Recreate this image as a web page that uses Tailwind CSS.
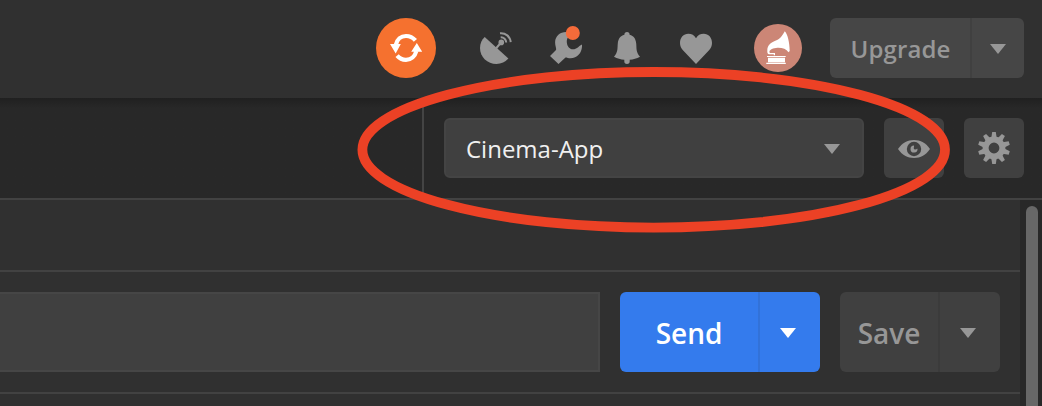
<!DOCTYPE html>
<html lang="en">
<head>
<meta charset="utf-8">
<title>Cinema-App</title>
<script src="https://cdn.jsdelivr.net/npm/@tailwindcss/browser@4"></script>
</head>
<body class="relative flex h-[406px] w-[1042px] flex-col overflow-hidden bg-[#303030] font-['Open_Sans',sans-serif] text-[#979797]">
  <header class="flex h-[98px] shrink-0 items-start justify-end pr-[18px] pt-[18px]">
    <button class="mr-[44px] size-[60px] rounded-full bg-[#f5712f]" aria-label="Sync">
      <svg class="block size-[60px]" viewBox="0 0 60 60" fill="none">
        <path d="M19.800 27C21 21.500 25 18 30 18c4 0 7 1.600 9.400 4.400M40.400 33C39 38.300 35 41.800 30 41.800c-3.700 0-6.500-1.300-8.900-4.200" stroke="#fff" stroke-width="4.200"/>
        <path d="M14 26h10.800l-5.100 9.400zM35.200 33.700h11L40.800 24.900z" fill="#fff"/>
      </svg>
    </button>
    <svg class="mr-[38px] mt-[14px] h-8 w-8" viewBox="0 0 32 32" fill="none">
      <path d="M4.700 5 28.400 26.500A16.400 16.400 0 0 1 16.500 32C7.400 32 0 25 0 16 0 11.500 1.800 7.800 4.700 5z" fill="currentColor"/>
      <path d="m16 16.500 5-6M20.700 5.200a5.300 5.300 0 0 1 5.500 5.300M20 1.200a9.700 9.700 0 0 1 10.700 8.900" stroke="currentColor" stroke-width="2"/>
      <circle cx="21.300" cy="10.400" r="2.800" fill="currentColor"/>
    </svg>
    <svg class="mr-[32px] mt-[6px] h-10 w-8" viewBox="0 0 32 40">
      <path d="M0 32 6 26C6.600 24 5 22 5.100 18 5.400 12 10 8 16 8L20 12C17 13.500 16.500 16 16.900 19 17.500 23 20 25.300 23 25.300 27 25.300 28 22.500 32 20.500 32.500 28 28 34 20.500 34.300 18.500 34.300 17 33.500 15.500 33.500L8.500 40z" fill="currentColor"/>
      <circle cx="22.800" cy="9" r="7" fill="#f56b3a"/>
    </svg>
    <svg class="mr-[40px] mt-[14px] h-8 w-[26px]" viewBox="0 0 26 32" fill="currentColor">
      <path d="M10.400 2.700a2.600 2.600 0 0 1 5.200 0c4.200 1 6.200 4.300 6.600 8.700.5 4.300-.5 8.300 3.800 13.300-3.300 1.700-6.700 2.700-10.300 3v1.600a2.700 2.700 0 0 1-5.400 0v-1.600C6.700 27.400 3.300 26.400 0 24.700c4.300-5 3.300-9 3.800-13.300.4-4.400 2.400-7.700 6.600-8.700z"/>
    </svg>
    <svg class="mr-[42px] mt-[14px] h-8 w-8" viewBox="0 0 32 32" fill="currentColor">
      <path d="M16 32 3.200 18.500C1 16.200 0 13.700 0 11 0 5.700 3.500 1.800 8.300 1.800c3.400 0 6 1.300 7.700 4.400 1.700-3.100 4.300-4.400 7.700-4.400C28.500 1.800 32 5.700 32 11c0 2.700-1 5.200-3.200 7.500z"/>
    </svg>
    <svg class="mr-[28px] mt-[6px] size-12 rounded-full bg-[#cc8676]" viewBox="0 0 48 48" fill="#fff">
      <path d="M30.800 7.200C33.500 10 35.600 18 35.700 27L34.500 28.200C32.500 25 28 23.600 23.500 23.800 19 24 16 25.500 15.400 27.700L15.800 29.100H21V31.200H19.800V30.300H15.200C13.300 30.200 13.300 28.500 13.300 26.500 13.300 21.500 16 18.700 22.500 16.200 27 14.400 28.800 10.500 30.800 7.200z"/>
      <path d="M13 32h18.700v1.100H13zM14 33.700h17v4.600H14zM12.300 38.700h19.500V40H12.300z"/>
    </svg>
    <div class="flex h-[60px] w-[194px] overflow-hidden rounded-md bg-[#464646] text-2xl font-semibold">
      <button class="w-[142px] border-r-2 border-[#404040] pl-px pt-[2px] tracking-[0.1px]">Upgrade</button>
      <button class="flex flex-1 items-center justify-center pt-[2px]" aria-label="Upgrade options"><svg class="h-[10px] w-4" viewBox="0 0 16 10" fill="currentColor"><path d="M0 0h16L8 10z"/></svg></button>
    </div>
  </header>

  <section class="flex h-[102px] shrink-0 justify-end border-b-2 border-[#424242] bg-linear-to-b from-[#202020] to-[#282828] to-10%">
    <div class="flex w-[620px] items-start gap-5 border-l-2 border-[#444] pl-5 pt-5">
      <button class="flex h-[60px] w-[420px] items-center justify-between rounded-md border-2 border-[#444] bg-[#404040] pl-5 pr-[22px] pt-[2px] text-2xl text-[#f0f0f0]">
        <span>Cinema-App</span>
        <svg class="h-[10px] w-4" viewBox="0 0 16 10" fill="#979797"><path d="M0 0h16L8 10z"/></svg>
      </button>
      <button class="flex size-[60px] items-center justify-center rounded-md bg-[#404040]" aria-label="Environment quick look">
        <svg class="mt-[2px] h-[18px] w-8" viewBox="0 0 32 18">
          <path d="M0 9C4 3 9.500 0 16 0s12 3 16 9c-4 6-9.500 9-16 9S4 15 0 9z" fill="#979797"/>
          <circle cx="16" cy="9" r="7.200" fill="#404040"/>
          <path d="M16 5.600v3.200h3.500a3.500 3.500 0 1 1-3.500-3.200z" fill="#979797"/>
          <circle cx="17.300" cy="7.900" r="1.600" fill="#404040"/>
        </svg>
      </button>
      <button class="flex size-[60px] items-center justify-center rounded-md bg-[#404040]" aria-label="Settings">
        <svg class="size-8" viewBox="-16 -16 32 32" fill="#979797">
          <defs><path id="tooth" d="M-2.700-10-1.800-16h3.600L2.700-10z"/></defs>
          <circle r="8.400" fill="none" stroke="#979797" stroke-width="6"/>
          <use href="#tooth"/><use href="#tooth" transform="rotate(36)"/><use href="#tooth" transform="rotate(72)"/><use href="#tooth" transform="rotate(108)"/><use href="#tooth" transform="rotate(144)"/><use href="#tooth" transform="rotate(180)"/><use href="#tooth" transform="rotate(216)"/><use href="#tooth" transform="rotate(252)"/><use href="#tooth" transform="rotate(288)"/><use href="#tooth" transform="rotate(324)"/>
        </svg>
      </button>
    </div>
  </section>

  <main class="flex min-h-0 flex-1">
    <div class="w-[1020px]">
      <div class="h-[72px] border-b-2 border-[#424242]"></div>
      <div class="flex h-[122px] gap-5 border-b-2 border-[#424242] pt-5">
        <div class="h-20 w-[600px] border-y-2 border-r-2 border-[#464646] bg-[#404040]"></div>
        <div class="flex h-20 w-[200px] overflow-hidden rounded-md bg-[#347bed] text-[28px] font-semibold text-white">
          <button class="w-[140px] border-r-2 border-[#3272d9] pt-[2px]">Send</button>
          <button class="flex flex-1 items-center justify-center pr-1 pt-[2px]" aria-label="Send options"><svg class="h-[10px] w-4" viewBox="0 0 16 10" fill="currentColor"><path d="M0 0h16L8 10z"/></svg></button>
        </div>
        <div class="flex h-20 w-[160px] overflow-hidden rounded-md bg-[#404040] text-[28px] font-semibold">
          <button class="w-[100px] border-r-2 border-[#3b3b3b] pt-[2px]">Save</button>
          <button class="flex flex-1 items-center justify-center pr-1 pt-[2px]" aria-label="Save options"><svg class="h-[10px] w-4" viewBox="0 0 16 10" fill="currentColor"><path d="M0 0h16L8 10z"/></svg></button>
        </div>
      </div>
    </div>
    <div class="flex-1 bg-[#282828] pl-[6px] pt-[6px]"><div class="h-[220px] w-3 rounded-full bg-[#676767]"></div></div>
  </main>

  <svg class="pointer-events-none absolute inset-0 h-[406px] w-[1042px]" viewBox="0 0 1042 406" fill="none">
    <ellipse cx="653.700" cy="149.800" rx="291.300" ry="77.800" stroke="#ec4125" stroke-width="9.800"/>
  </svg>
</body>
</html>
